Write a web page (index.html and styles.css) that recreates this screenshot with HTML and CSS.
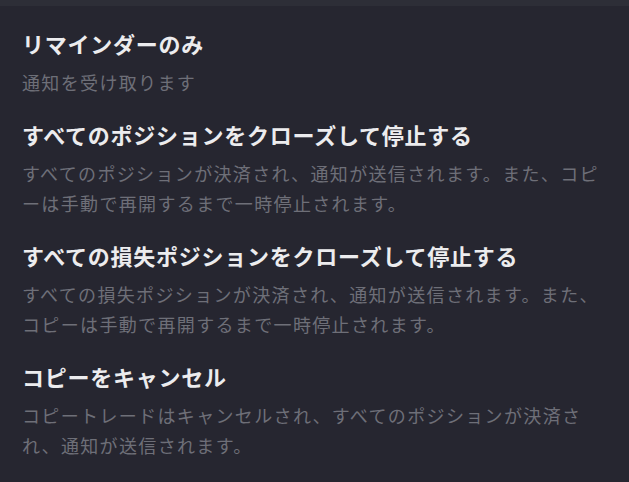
FILE: index.html
```html
<!DOCTYPE html>
<html lang="ja">
<head>
<meta charset="utf-8">
<link rel="stylesheet" href="styles.css">
</head>
<body>
<div class="panel">
  <div class="topbar"></div>
  <ul class="options">
    <li class="option">
      <h3 class="option-title">リマインダーのみ</h3>
      <p class="option-desc">通知を受け取ります</p>
    </li>
    <li class="option">
      <h3 class="option-title">すべてのポジションをクローズして停止する</h3>
      <p class="option-desc">すべてのポジションが決済され、通知が送信されます。また、コピーは手動で再開するまで一時停止されます。</p>
    </li>
    <li class="option">
      <h3 class="option-title">すべての損失ポジションをクローズして停止する</h3>
      <p class="option-desc">すべての損失ポジションが決済され、通知が送信されます。また、コピーは手動で再開するまで一時停止されます。</p>
    </li>
    <li class="option">
      <h3 class="option-title">コピーをキャンセル</h3>
      <p class="option-desc">コピートレードはキャンセルされ、すべてのポジションが決済され、通知が送信されます。</p>
    </li>
  </ul>
</div>
</body>
</html>
```

FILE: styles.css
```css
html, body {
  margin: 0;
  padding: 0;
  background: #262630;
}
body {
  width: 629px;
  height: 482px;
  overflow: hidden;
  font-family: "Noto Sans CJK JP", "Noto Sans", sans-serif;
}
.panel {
  display: flex;
  flex-direction: column;
}
.topbar {
  height: 6px;
  background: #2d2e37;
}
.options {
  list-style: none;
  margin: 0;
  padding: 22px 17px 0 22px;
  display: flex;
  flex-direction: column;
  gap: 22px;
}
.option {
  display: flex;
  flex-direction: column;
  gap: 9px;
}
.option-title {
  margin: 0;
  font-size: 22px;
  letter-spacing: 0.75px;
  line-height: 30px;
  font-weight: 700;
  color: #ececee;
}
.option-desc {
  margin: 0;
  font-size: 18px;
  letter-spacing: 1.35px;
  line-height: 30px;
  color: #6e6f78;
  line-break: loose;
}
```
